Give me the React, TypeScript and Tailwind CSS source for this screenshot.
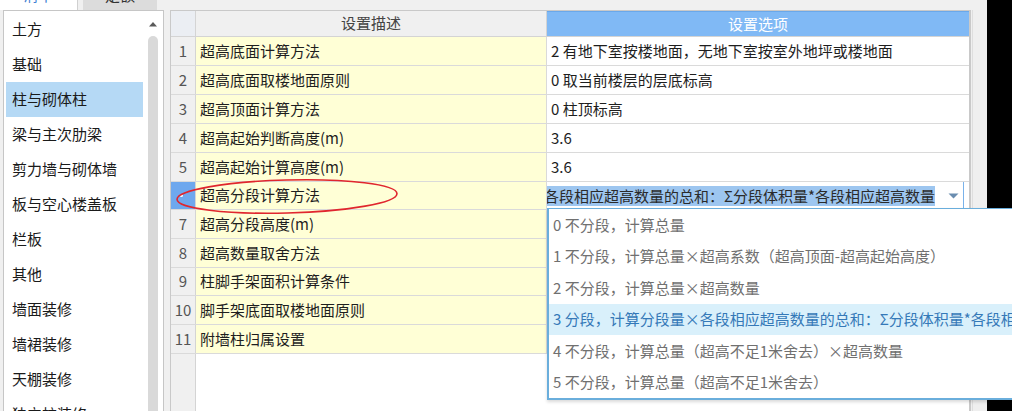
import React from "react";

const FONT = "font-['Noto_Sans_CJK_SC','Noto_Sans',sans-serif]";

const leftItems = [
  "土方",
  "基础",
  "柱与砌体柱",
  "梁与主次肋梁",
  "剪力墙与砌体墙",
  "板与空心楼盖板",
  "栏板",
  "其他",
  "墙面装修",
  "墙裙装修",
  "天棚装修",
  "独立柱装修",
];

const rows: { desc: string; opt: string; h: string }[] = [
  { desc: "超高底面计算方法", opt: "2 有地下室按楼地面，无地下室按室外地坪或楼地面", h: "h-[29px]" },
  { desc: "超高底面取楼地面原则", opt: "0 取当前楼层的层底标高", h: "h-[29px]" },
  { desc: "超高顶面计算方法", opt: "0 柱顶标高", h: "h-[29px]" },
  { desc: "超高起始判断高度(m)", opt: "3.6", h: "h-[29px]" },
  { desc: "超高起始计算高度(m)", opt: "3.6", h: "h-[29px]" },
  { desc: "超高分段计算方法", opt: "", h: "h-[28px]" },
  { desc: "超高分段高度(m)", opt: "", h: "h-[29px]" },
  { desc: "超高数量取舍方法", opt: "", h: "h-[29px]" },
  { desc: "柱脚手架面积计算条件", opt: "", h: "h-[28px]" },
  { desc: "脚手架底面取楼地面原则", opt: "", h: "h-[29px]" },
  { desc: "附墙柱归属设置", opt: "", h: "h-[29px]" },
];

const dropItems = [
  "0 不分段，计算总量",
  "1 不分段，计算总量×超高系数（超高顶面-超高起始高度）",
  "2 不分段，计算总量×超高数量",
  "3 分段，计算分段量×各段相应超高数量的总和：Σ分段体积量*各段相应超高数量",
  "4 不分段，计算总量（超高不足1米舍去）×超高数量",
  "5 不分段，计算总量（超高不足1米舍去）",
];

export default function App() {
  return (
    <div
      className={`relative flex h-[411px] w-[1012px] overflow-hidden bg-[#f0f0f0] text-[15px] ${FONT}`}
    >
      <div className="flex w-[987px] flex-col">
        {/* tabs */}
        <div className="flex h-[10px] overflow-hidden">
          <div className="flex h-full w-[78px] justify-center overflow-hidden border-r border-[#d0d0d0] bg-white">
            <span className="mt-[-14px] leading-[18px] text-[#3d80d2]">清单</span>
          </div>
          <div className="ml-[5px] flex h-full w-[74px] justify-center overflow-hidden bg-[#dcdcdc]">
            <span className="mt-[-14px] leading-[18px] text-[#333]">定额</span>
          </div>
        </div>

        <div className="flex flex-1 overflow-hidden">
          {/* left panel */}
          <div className="ml-[3px] flex w-[161px] border-x border-t border-[#c6c6c6] bg-white">
            <div className="flex w-[141px] flex-col pl-[2px] pt-[1px]">
              {leftItems.map((t, i) => (
                <div
                  key={t}
                  className={`flex h-[35px] w-[137px] shrink-0 items-center pl-[6px] text-[#1a1a1a] ${
                    i === 2 ? "bg-[#b5d9f5]" : ""
                  }`}
                >
                  {t}
                </div>
              ))}
            </div>
            <div className="ml-[1px] flex w-[14px] flex-col items-center">
              <svg width="10" height="6" viewBox="0 0 10 6" className="mt-[10px]">
                <path d="M1 5.5 L5 1 L9 5.5 Z" fill="#5a5a5a" />
              </svg>
              <div className="mt-[9px] w-[10px] flex-1 rounded-t-full bg-[#d9d9d9]" />
            </div>
          </div>

          {/* gap */}
          <div className="w-[6px]" />

          {/* table */}
          <div className="flex w-[801px] flex-col border-l border-r-2 border-t border-[#c9c9c9] bg-white">
            <div className="flex h-[26px] shrink-0 border-b border-[#d4d4d4]">
              <div className="w-[25px] border-r border-[#d4d4d4] bg-[#ebeef3]" />
              <div className="flex w-[351px] items-center justify-center border-r border-[#d4d4d4] bg-[#f0f0f0] text-[#444]">
                设置描述
              </div>
              <div className="flex flex-1 items-center justify-center border-t border-[#6aa8ea] bg-[#80b9f5] text-white">
                设置选项
              </div>
            </div>
            {rows.map((r, i) => (
              <div key={i} className={`flex shrink-0 border-b border-[#dadada] ${r.h}`}>
                <div
                  className={`flex w-[25px] items-center justify-center border-r border-[#d4d4d4] text-[#555] ${
                    i === 5 ? "bg-[#6ea8ee]" : "bg-[#f0f0f0]"
                  }`}
                >
                  {i === 5 ? (
                    <span className="ml-[-4px] h-[3px] w-[3px] rounded-full bg-white" />
                  ) : (
                    i + 1
                  )}
                </div>
                <div className="flex w-[351px] items-center border-r border-[#dadada] bg-[#ffffd6] pl-[4px] text-[#1e1e1e]">
                  {r.desc}
                </div>
                <div className="flex flex-1 items-center overflow-hidden pl-[4px] text-[#1e1e1e]">
                  {i === 5 ? (
                    <div className="ml-[-5px] flex h-[29px] w-full items-center border border-[#7ab2ea] bg-white">
                      <div className="flex w-[388px] justify-end overflow-hidden whitespace-nowrap">
                        <span className="bg-[#9dc6f0] leading-[20px] text-[#2a2a2a]">
                          3 分段，计算分段量×各段相应超高数量的总和：Σ分段体积量*各段相应超高数量
                        </span>
                      </div>
                      <svg width="11" height="6" viewBox="0 0 11 6" className="ml-[13px]">
                        <path d="M0.5 0.5 L10.5 0.5 L5.5 5.5 Z" fill="#6a8db0" />
                      </svg>
                    </div>
                  ) : (
                    <span className="whitespace-nowrap">{r.opt}</span>
                  )}
                </div>
              </div>
            ))}
            <div className="flex flex-1">
              <div className="w-[25px] border-r border-[#d4d4d4] bg-[#f0f0f0]" />
              <div className="flex-1 bg-white" />
            </div>
          </div>

          {/* right strip */}
          <div className="flex flex-1 bg-[#efefef]">
            <div className="ml-[1px] w-[1px] bg-[#dedede]" />
          </div>
        </div>
      </div>
      <div className="flex-1 bg-black" />

      {/* dropdown list */}
      <div className="absolute left-[547px] top-[208px] w-[480px] border-b-2 border-l-2 border-t border-[#6aaedc] bg-white shadow-[0_2px_3px_rgba(0,0,0,0.15)]">
        {dropItems.map((t, i) => (
          <div
            key={i}
            className={`flex h-[31.5px] items-center whitespace-nowrap pl-[4px] ${
              i === 3 ? "bg-[#d9f0fb] text-[#3579b8]" : "text-[#707070]"
            }`}
          >
            {t}
          </div>
        ))}
      </div>

      {/* red annotation ellipse */}
      <svg
        className="pointer-events-none absolute left-0 top-0"
        width="1012"
        height="411"
        viewBox="0 0 1012 411"
      >
        <ellipse
          cx="287"
          cy="196.5"
          rx="110"
          ry="16.5"
          fill="none"
          stroke="#e0262e"
          strokeWidth="1.6"
          transform="rotate(-1.5 287 196.5)"
        />
      </svg>
    </div>
  );
}
